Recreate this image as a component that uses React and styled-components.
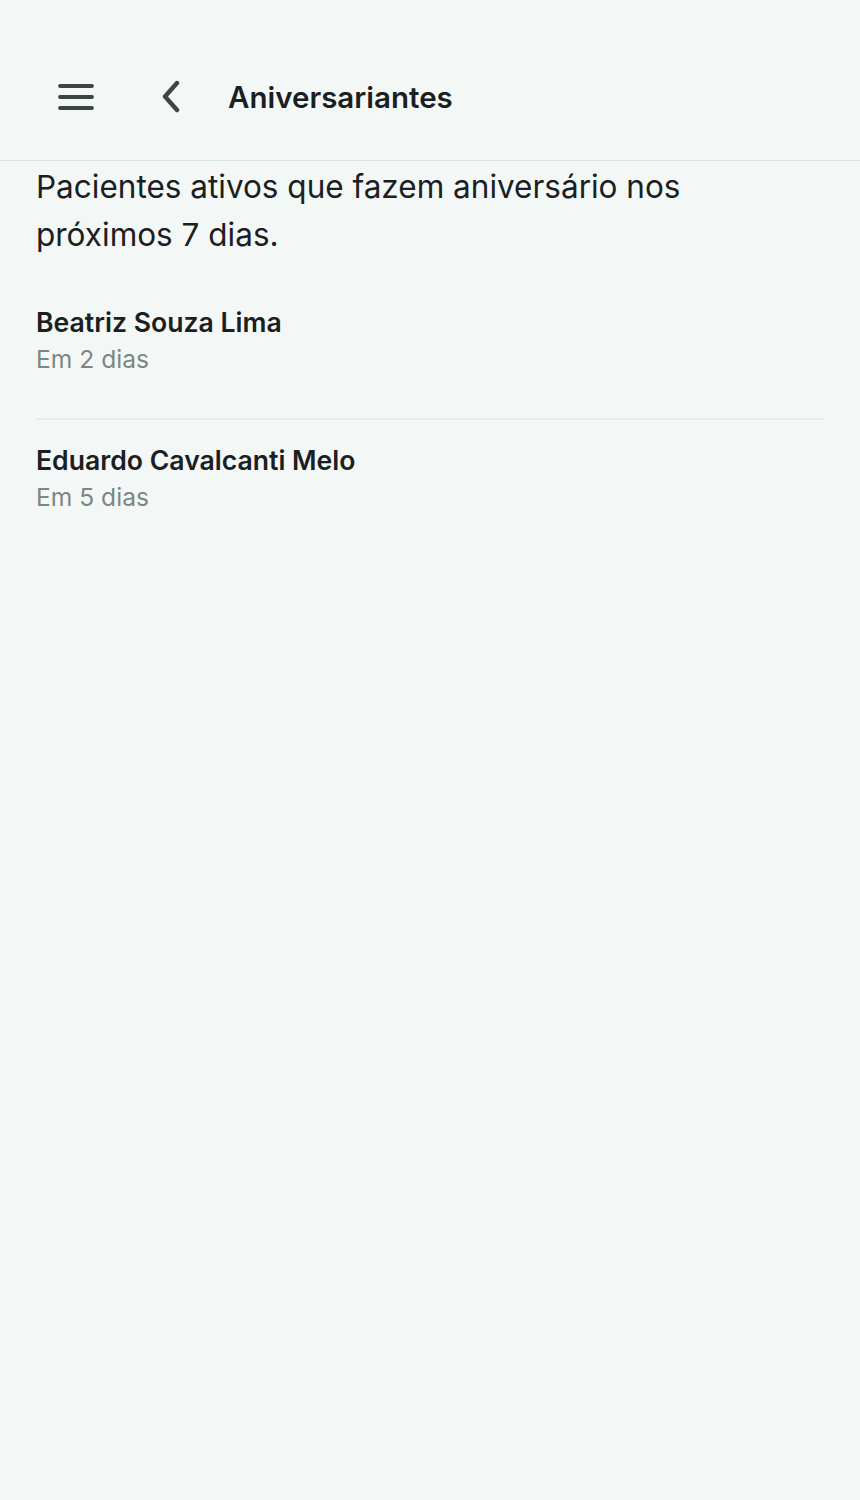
import React from "react";
import styled, { createGlobalStyle } from "styled-components";

const Global = createGlobalStyle`
  html, body { margin: 0; padding: 0; background: #f3f7f6; }
  body { font-family: Inter, "Noto Sans", sans-serif; color: #1a201f; }
  * { box-sizing: border-box; }
`;

const Page = styled.div`
  min-height: 1500px;
  background: #f3f7f6;
`;

const Header = styled.header`
  height: 161px;
  padding: 64px 36px 0 54px;
  border-bottom: 1px solid #dde3e2;
`;

const Toolbar = styled.div`
  display: flex;
  align-items: center;
  height: 66px;
`;

const IconButton = styled.button`
  display: flex;
  align-items: center;
  justify-content: center;
  width: ${(p) => p.$w}px;
  height: 44px;
  padding: 0;
  border: 0;
  background: none;
  margin-right: ${(p) => p.$mr}px;
  color: #3d4543;
`;

const Title = styled.h1`
  margin: 0;
  font-size: 29.5px;
  font-weight: 600;
  color: #1a201f;
`;

const Content = styled.main`
  padding: 0 36px;
`;

const Description = styled.p`
  margin: 2px 0 23px;
  max-width: 720px;
  font-size: 31.5px;
  line-height: 48px;
  color: #1a201f;
`;

const List = styled.ul`
  list-style: none;
  margin: 0;
  padding: 0;
`;

const Item = styled.li`
  padding: 22px 0 40px;
  border-top: ${(p) => (p.$first ? "0" : "2px solid #eaeeed")};
`;

const Name = styled.div`
  font-size: 26.6px;
  line-height: 36px;
  font-weight: 600;
  color: #1a201f;
`;

const Sub = styled.div`
  font-size: 24.6px;
  line-height: 38px;
  color: #7b8784;
`;

const people = [
  { name: "Beatriz Souza Lima", when: "Em 2 dias" },
  { name: "Eduardo Cavalcanti Melo", when: "Em 5 dias" },
];

export default function App() {
  return (
    <Page>
      <Global />
      <Header>
        <Toolbar>
          <IconButton $w={44} $mr={58} aria-label="Menu">
            <svg width="40" height="30" viewBox="0 0 40 30">
              <g stroke="#3d4543" strokeWidth="3.8" strokeLinecap="round">
                <line x1="4" y1="4" x2="36" y2="4" />
                <line x1="4" y1="15" x2="36" y2="15" />
                <line x1="4" y1="26" x2="36" y2="26" />
              </g>
            </svg>
          </IconButton>
          <IconButton $w={30} $mr={42} aria-label="Voltar">
            <svg width="24" height="34" viewBox="0 0 24 34">
              <polyline
                points="18,3 6,16.5 18,30"
                fill="none"
                stroke="#3d4543"
                strokeWidth="4.4"
                strokeLinecap="round"
                strokeLinejoin="round"
              />
            </svg>
          </IconButton>
          <Title>Aniversariantes</Title>
        </Toolbar>
      </Header>
      <Content>
        <Description>
          Pacientes ativos que fazem aniversário nos próximos 7 dias.
        </Description>
        <List>
          {people.map((p, i) => (
            <Item key={p.name} $first={i === 0}>
              <Name>{p.name}</Name>
              <Sub>{p.when}</Sub>
            </Item>
          ))}
        </List>
      </Content>
    </Page>
  );
}
